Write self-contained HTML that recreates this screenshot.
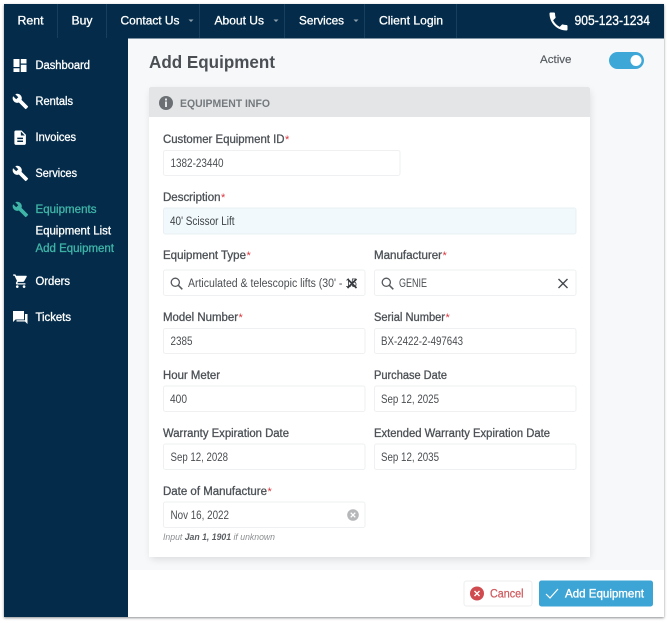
<!DOCTYPE html>
<html lang="en">
<head>
<meta charset="utf-8">
<title>Add Equipment</title>
<style>
html,body{margin:0;padding:0;background:#fff;width:670px;height:623px;overflow:hidden}
svg{display:block;filter:blur(.3px)}
text{font-family:"Liberation Sans",sans-serif}
.nav{font-size:12px;fill:#fff;stroke:#fff;stroke-width:.3}
.side{font-size:11.5px;fill:#fff;stroke:#fff;stroke-width:.3}
.act{fill:#3fb5a8;stroke:#3fb5a8}
.lab{font-size:11.5px;fill:#4c5156;stroke:#4c5156;stroke-width:.3}
.val{font-size:11.5px;fill:#4a4e52}
.star{font-size:11px;fill:#d9363e}
.inp{fill:#fff;stroke:#eef0f1;stroke-width:1}
</style>
</head>
<body>
<svg width="670" height="623" viewBox="0 0 670 623" xmlns="http://www.w3.org/2000/svg">
<defs>
<filter id="sh" x="-10%" y="-10%" width="120%" height="120%"><feGaussianBlur stdDeviation="4"/></filter>
<filter id="fr" x="-5%" y="-5%" width="110%" height="110%"><feGaussianBlur stdDeviation="1.2"/></filter>
<path id="wrench" transform="scale(.7)" d="M22.700 19l-9.100-9.100c.9-2.300.4-5-1.500-6.900-2-2-5-2.400-7.400-1.300L9 6 6 9 1.600 4.700C.4 7.100.9 10.100 2.900 12.100c1.900 1.900 4.600 2.400 6.900 1.500l9.100 9.100c.4.400 1 .4 1.400 0l2.300-2.300c.5-.4.500-1.100.1-1.400z"/>
<g id="srch"><circle cx="5.300" cy="5.300" r="4.100" fill="none" stroke="#55595d" stroke-width="1.300"/><path d="M8.300 8.300l4 4" stroke="#55595d" stroke-width="1.500" fill="none"/></g>
</defs>

<rect x="4" y="5" width="660" height="613" fill="#8b8d8f" filter="url(#fr)"/>
<rect x="4" y="4" width="660" height="613" fill="#fff"/>

<!-- content background -->
<rect x="128" y="38" width="536" height="532" fill="#f6f8fa"/>
<rect x="128" y="570" width="536" height="47" fill="#fff"/>

<!-- nav + sidebar -->
<rect x="4" y="4" width="660" height="34.500" fill="#042c4a"/>
<rect x="4" y="38" width="124" height="579" fill="#042c4a"/>
<g stroke="#17405e" stroke-width="1">
<path d="M57.500 4v34M106.500 4v34M199.500 4v34M284.500 4v34M364.500 4v34M456.500 4v34"/>
</g>
<text class="nav" x="17.500" y="24.500" textLength="26" lengthAdjust="spacingAndGlyphs">Rent</text>
<text class="nav" x="71.500" y="24.500" textLength="21" lengthAdjust="spacingAndGlyphs">Buy</text>
<text class="nav" x="120.500" y="24.500" textLength="59" lengthAdjust="spacingAndGlyphs">Contact Us</text>
<text class="nav" x="214.500" y="24.500" textLength="49.500" lengthAdjust="spacingAndGlyphs">About Us</text>
<text class="nav" x="299" y="24.500" textLength="45" lengthAdjust="spacingAndGlyphs">Services</text>
<text class="nav" x="379" y="24.500" textLength="64" lengthAdjust="spacingAndGlyphs">Client Login</text>
<path d="M188.500 19.500h5l-2.500 2.500zM273.500 19.500h5l-2.500 2.500zM353.500 19.500h5l-2.500 2.500z" fill="#8d9eac"/>
<!-- phone -->
<path transform="translate(546.500 9.500)" fill="#fff" d="M6.620 10.790c1.440 2.830 3.760 5.140 6.590 6.590l2.200-2.200c.27-.27.67-.36 1.020-.24 1.120.37 2.330.57 3.570.57.55 0 1 .45 1 1V20c0 .55-.45 1-1 1-9.390 0-17-7.610-17-17 0-.55.45-1 1-1h3.500c.55 0 1 .45 1 1 0 1.250.2 2.450.57 3.570.11.35.03.74-.25 1.020l-2.200 2.200z"/>
<text x="574.500" y="25" font-size="13.500" fill="#fff" stroke="#fff" stroke-width=".3" textLength="75.500" lengthAdjust="spacingAndGlyphs">905-123-1234</text>

<!-- sidebar icons -->
<g fill="#fff">
<path d="M13.500 59h6v8h-6zM20.800 59h5.700v4.500h-5.700zM13.500 68.300h6v3.700h-6zM20.800 64.700h5.700v7.300h-5.700z"/>
<use href="#wrench" x="0" y="0" transform="translate(12 93)"/>
<use href="#wrench" x="0" y="0" transform="translate(12 165)"/>
<!-- invoice -->
<path transform="translate(11.500 129) scale(.72)" d="M14 2H6c-1.100 0-1.990.9-1.990 2L4 20c0 1.100.89 2 1.990 2H18c1.100 0 2-.9 2-2V8l-6-6zm2 16H8v-2h8v2zm0-4H8v-2h8v2zm-3-5V3.500L18.500 9H13z"/>
<!-- cart -->
<path transform="translate(12.500 273) scale(.68)" d="M7 18c-1.100 0-1.990.9-1.990 2S5.900 22 7 22s2-.9 2-2-.9-2-2-2zM1 2v2h2l3.600 7.590-1.350 2.450c-.16.28-.25.61-.25.96 0 1.100.9 2 2 2h12v-2H7.420c-.14 0-.25-.11-.25-.25l.03-.12.9-1.630h7.450c.75 0 1.410-.41 1.750-1.030l3.580-6.490c.08-.14.12-.31.12-.48 0-.55-.45-1-1-1H5.210l-.94-2H1zm16 16c-1.100 0-1.990.9-1.990 2s.89 2 1.990 2 2-.9 2-2-.9-2-2-2z"/>
<!-- tickets -->
<path d="M13 311h11v8.500H15.500L13 322z"/>
<path d="M25 314h2.500v10l-2.500-2.500h-8.500v-1.300H25z"/>
</g>
<use href="#wrench" transform="translate(12 201)" fill="#3fb5a8"/>

<text class="side" x="35.500" y="69" textLength="54.500" lengthAdjust="spacingAndGlyphs">Dashboard</text>
<text class="side" x="35.500" y="105" textLength="37.500" lengthAdjust="spacingAndGlyphs">Rentals</text>
<text class="side" x="35.500" y="141" textLength="40.500" lengthAdjust="spacingAndGlyphs">Invoices</text>
<text class="side" x="35.500" y="177" textLength="41.500" lengthAdjust="spacingAndGlyphs">Services</text>
<text class="side act" x="35.500" y="213" textLength="61" lengthAdjust="spacingAndGlyphs">Equipments</text>
<text class="side" x="35.500" y="234.500" textLength="75.500" lengthAdjust="spacingAndGlyphs">Equipment List</text>
<text class="side act" x="35.500" y="252" textLength="78.500" lengthAdjust="spacingAndGlyphs">Add Equipment</text>
<text class="side" x="35.500" y="285" textLength="34.500" lengthAdjust="spacingAndGlyphs">Orders</text>
<text class="side" x="35.500" y="321" textLength="35.500" lengthAdjust="spacingAndGlyphs">Tickets</text>

<!-- title -->
<text x="149" y="68" font-size="17.500" font-weight="700" fill="#4b4f54" textLength="126" lengthAdjust="spacingAndGlyphs">Add Equipment</text>
<text x="540" y="63" font-size="11" fill="#55595d" stroke="#55595d" stroke-width=".15" textLength="31.500" lengthAdjust="spacingAndGlyphs">Active</text>
<rect x="609" y="52" width="35" height="17" rx="8.500" fill="#3da8d8"/>
<circle cx="636" cy="60.500" r="5.500" fill="#fff"/>

<!-- card -->
<rect x="151" y="91" width="439" height="468" fill="#000" opacity=".12" filter="url(#sh)"/>
<rect x="149" y="87" width="441" height="470" fill="#fff"/>
<path d="M149 117V89a2 2 0 0 1 2-2h437a2 2 0 0 1 2 2v28z" fill="#e3e5e6"/>
<circle cx="166" cy="103" r="7" fill="#6c7074"/>
<path d="M165 101.500h2v5.500h-2zM165 98.500h2v2h-2z" fill="#e3e5e6"/>
<text x="180" y="107" font-size="11" font-weight="700" fill="#75797d" textLength="90" lengthAdjust="spacingAndGlyphs">EQUIPMENT INFO</text>

<!-- fields -->
<text class="lab" x="163" y="143" textLength="121.500" lengthAdjust="spacingAndGlyphs">Customer Equipment ID</text><text class="star" x="285" y="143">*</text>
<rect class="inp" x="163.500" y="150.500" width="236.500" height="25" rx="2"/>
<text class="val" x="170.500" y="167" textLength="53" lengthAdjust="spacingAndGlyphs">1382-23440</text>

<text class="lab" x="163" y="201" textLength="57.500" lengthAdjust="spacingAndGlyphs">Description</text><text class="star" x="221" y="201">*</text>
<rect x="163.500" y="208" width="412.500" height="26" rx="2" fill="#f1f9fc" stroke="#e8f0f3"/>
<text class="val" x="170" y="225" textLength="64.500" lengthAdjust="spacingAndGlyphs" style="fill:#3e4246">40' Scissor Lift</text>

<text class="lab" x="163" y="259" textLength="83" lengthAdjust="spacingAndGlyphs">Equipment Type</text><text class="star" x="246.500" y="259">*</text>
<rect class="inp" x="163.500" y="270" width="201.500" height="25.500" rx="2"/>
<use href="#srch" x="170" y="277"/>
<text class="val" x="188" y="287" textLength="169" lengthAdjust="spacingAndGlyphs">Articulated &amp; telescopic lifts (30' - 15</text>
<path d="M347.500 279l9 9M356.500 279l-9 9" stroke="#363a3e" stroke-width="1.700" fill="none"/>

<text class="lab" x="374" y="259" textLength="68" lengthAdjust="spacingAndGlyphs">Manufacturer</text><text class="star" x="442.500" y="259">*</text>
<rect class="inp" x="374.500" y="270" width="201.500" height="25.500" rx="2"/>
<use href="#srch" x="381" y="277"/>
<text class="val" x="399" y="287" textLength="28" lengthAdjust="spacingAndGlyphs">GENIE</text>
<path d="M558.500 279l9 9M567.500 279l-9 9" stroke="#44484c" stroke-width="1.400" fill="none"/>

<text class="lab" x="163" y="321" textLength="75" lengthAdjust="spacingAndGlyphs">Model Number</text><text class="star" x="238.500" y="321">*</text>
<rect class="inp" x="163.500" y="328.500" width="201.500" height="25" rx="2"/>
<text class="val" x="170.500" y="345" textLength="22" lengthAdjust="spacingAndGlyphs">2385</text>

<text class="lab" x="374" y="321" textLength="71" lengthAdjust="spacingAndGlyphs">Serial Number</text><text class="star" x="445.500" y="321">*</text>
<rect class="inp" x="374.500" y="328.500" width="201.500" height="25" rx="2"/>
<text class="val" x="381" y="345" textLength="82" lengthAdjust="spacingAndGlyphs">BX-2422-2-497643</text>

<text class="lab" x="163" y="379" textLength="57" lengthAdjust="spacingAndGlyphs">Hour Meter</text>
<rect class="inp" x="163.500" y="386" width="201.500" height="25.500" rx="2"/>
<text class="val" x="170" y="403" textLength="17" lengthAdjust="spacingAndGlyphs">400</text>

<text class="lab" x="374" y="379" textLength="73" lengthAdjust="spacingAndGlyphs">Purchase Date</text>
<rect class="inp" x="374.500" y="386" width="201.500" height="25.500" rx="2"/>
<text class="val" x="381" y="403" textLength="58" lengthAdjust="spacingAndGlyphs">Sep 12, 2025</text>

<text class="lab" x="163" y="437" textLength="126" lengthAdjust="spacingAndGlyphs">Warranty Expiration Date</text>
<rect class="inp" x="163.500" y="444" width="201.500" height="25.500" rx="2"/>
<text class="val" x="170.500" y="461" textLength="57.500" lengthAdjust="spacingAndGlyphs">Sep 12, 2028</text>

<text class="lab" x="374" y="437" textLength="176" lengthAdjust="spacingAndGlyphs">Extended Warranty Expiration Date</text>
<rect class="inp" x="374.500" y="444" width="201.500" height="25.500" rx="2"/>
<text class="val" x="381" y="461" textLength="58" lengthAdjust="spacingAndGlyphs">Sep 12, 2035</text>

<text class="lab" x="163" y="495" textLength="104" lengthAdjust="spacingAndGlyphs">Date of Manufacture</text><text class="star" x="267.500" y="495">*</text>
<rect class="inp" x="163.500" y="502" width="201.500" height="25.500" rx="2"/>
<text class="val" x="170.500" y="519" textLength="58.500" lengthAdjust="spacingAndGlyphs">Nov 16, 2022</text>
<circle cx="353" cy="515" r="5.800" fill="#b5b7b9"/>
<path d="M350.700 512.700l4.600 4.600M355.300 512.700l-4.600 4.600" stroke="#fff" stroke-width="1.300"/>
<text x="163" y="540" font-size="9" font-style="italic" fill="#8b8e91" textLength="112" lengthAdjust="spacingAndGlyphs">Input <tspan font-weight="700" fill="#5b5f63">Jan 1, 1901</tspan> if unknown</text>

<!-- footer buttons -->
<rect x="464" y="581" width="68" height="25" rx="2.500" fill="#fff" stroke="#eceeef"/>
<circle cx="477" cy="593.500" r="7" fill="#cf4b4f"/>
<path d="M474.500 591l5 5M479.500 591l-5 5" stroke="#fff" stroke-width="1.400"/>
<text x="490" y="597.500" font-size="11.500" fill="#cf5a5e" stroke="#cf5a5e" stroke-width=".25" textLength="33.500" lengthAdjust="spacingAndGlyphs">Cancel</text>
<rect x="539" y="580.500" width="114" height="26" rx="2.500" fill="#3da5d6"/>
<path d="M546 594l4 4 8-9" stroke="#fff" stroke-width="1.200" fill="none"/>
<text x="565" y="597.500" font-size="12" fill="#fff" stroke="#fff" stroke-width=".35" textLength="79" lengthAdjust="spacingAndGlyphs">Add Equipment</text>
</svg>
</body>
</html>
